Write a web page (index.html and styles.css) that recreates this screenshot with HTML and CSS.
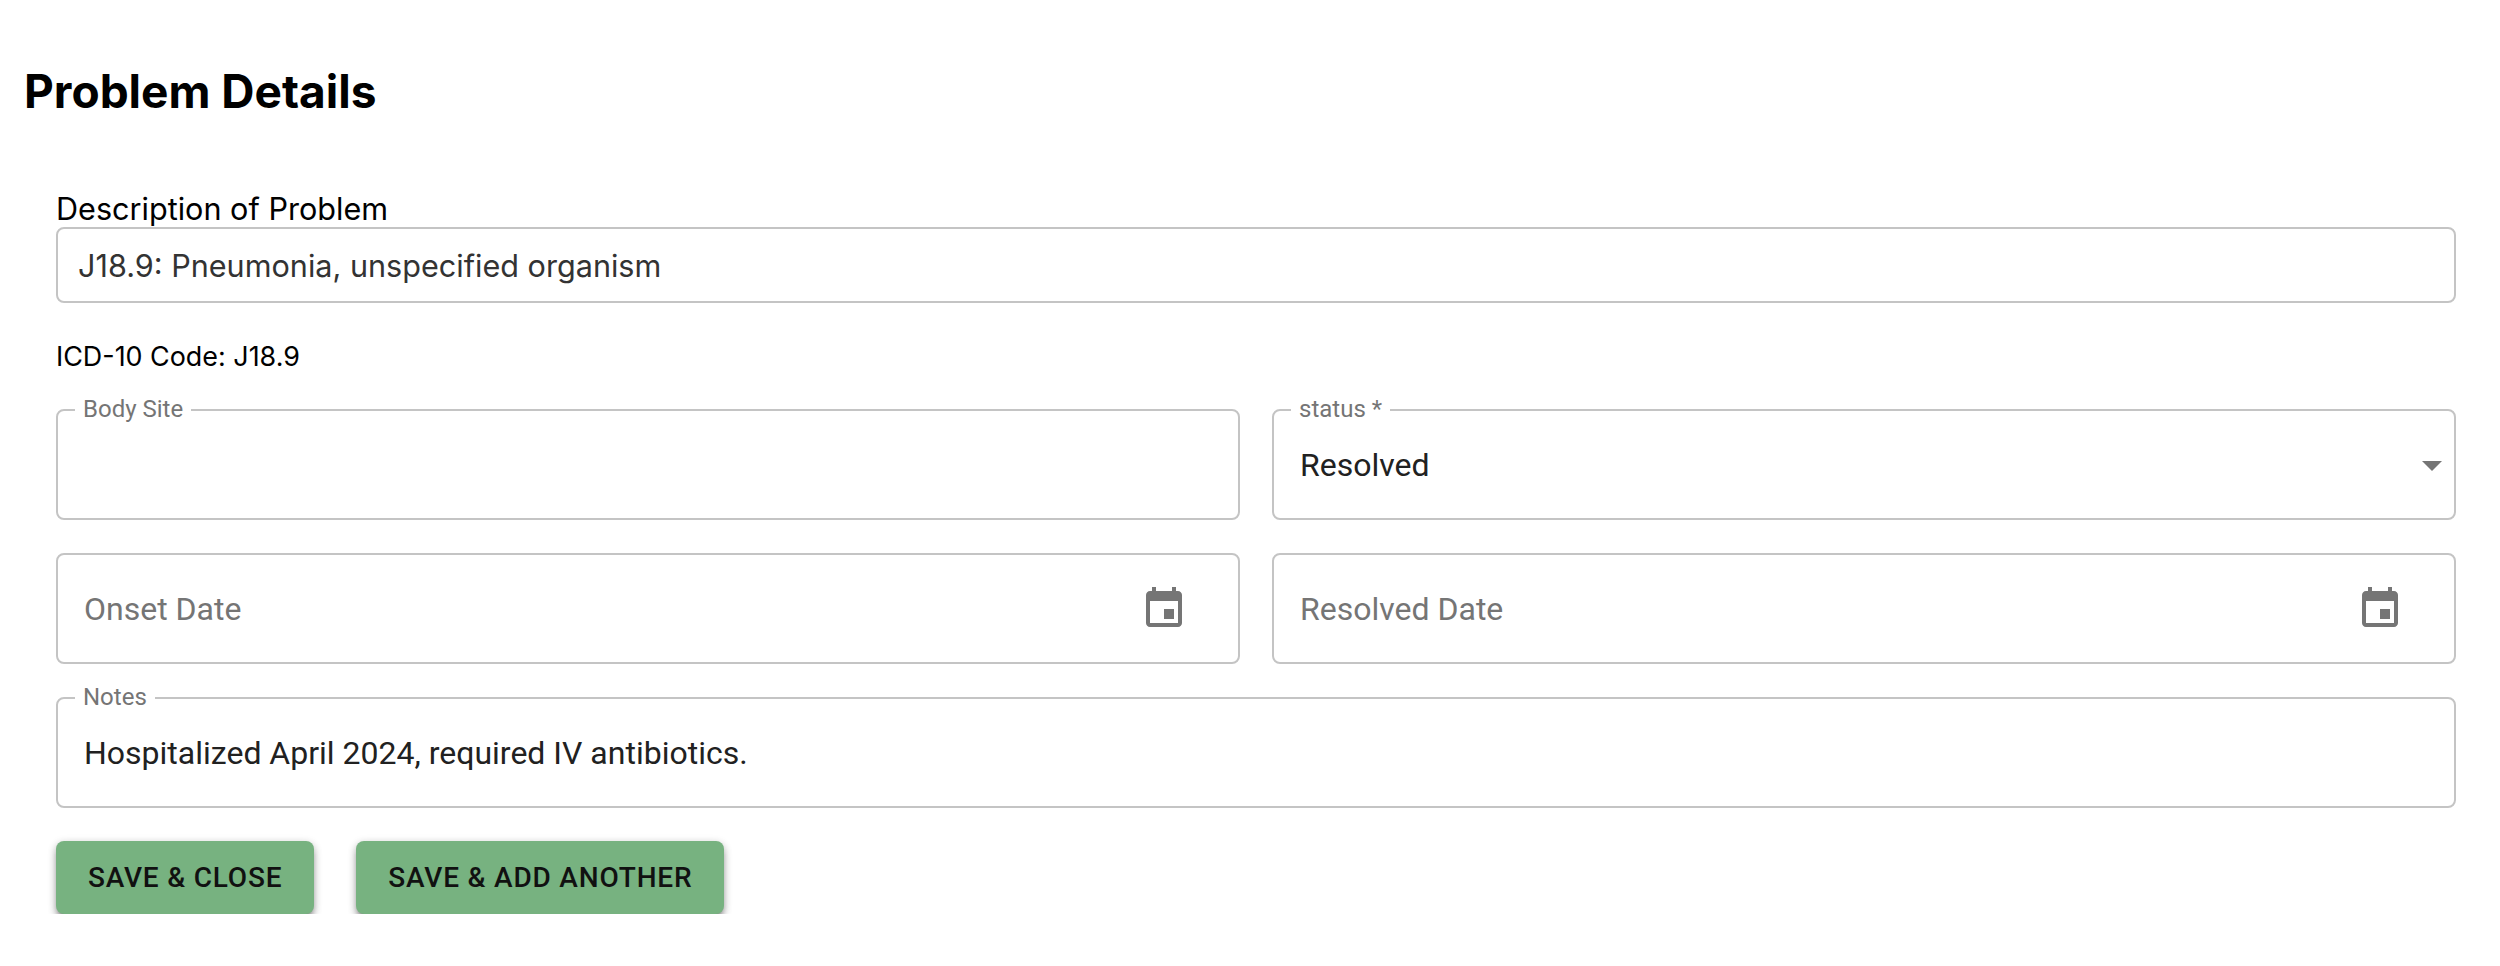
FILE: index.html
```html
<!DOCTYPE html>
<html lang="en">
<head>
    <meta charset="UTF-8">
    <title>Problem Details</title>
    <link rel="stylesheet" href="styles.css">
</head>
<body>

<div class="page">
    <h1>Problem Details</h1>

    <div class="form">
        <div class="description">
            <div class="description-label">Description of Problem</div>
            <div class="description-input">J18.9: Pneumonia, unspecified organism</div>
        </div>

        <div class="code">ICD-10 Code: J18.9</div>

        <div class="form-grid">
            <div class="field">
                <span class="field-label">Body Site</span>
            </div>
            <div class="field">
                <span class="field-label">status *</span>
                <span class="field-value">Resolved</span>
                <svg class="arrow" viewBox="0 0 24 24"><path d="M7 10l5 5 5-5z"/></svg>
            </div>
            <div class="field">
                <span class="field-placeholder">Onset Date</span>
                <svg class="calendar" viewBox="0 0 24 24"><path d="M17 12h-5v5h5v-5zM16 1v2H8V1H6v2H5c-1.11 0-1.99.9-1.99 2L3 19c0 1.1.89 2 2 2h14c1.1 0 2-.9 2-2V5c0-1.1-.9-2-2-2h-1V1h-2zm3 18H5V8h14v11z"/></svg>
            </div>
            <div class="field">
                <span class="field-placeholder">Resolved Date</span>
                <svg class="calendar" viewBox="0 0 24 24"><path d="M17 12h-5v5h5v-5zM16 1v2H8V1H6v2H5c-1.11 0-1.99.9-1.99 2L3 19c0 1.1.89 2 2 2h14c1.1 0 2-.9 2-2V5c0-1.1-.9-2-2-2h-1V1h-2zm3 18H5V8h14v11z"/></svg>
            </div>
            <div class="field field-wide">
                <span class="field-label">Notes</span>
                <span class="field-value">Hospitalized April 2024, required IV antibiotics.</span>
            </div>
        </div>

        <div class="buttons">
            <button class="btn" type="button">Save &amp; Close</button>
            <button class="btn" type="button">Save &amp; Add Another</button>
        </div>
    </div>
</div>

</body>
</html>
```

FILE: styles.css
```css
* {
    padding: 0;
    margin: 0;
    box-sizing: border-box;
}

body {
    font-family: Inter, sans-serif;
    background-color: #fff;
    color: #000;
}

.page {
    padding: 64px 44px 0 24px;
}

h1 {
    font-size: 46px;
    line-height: 54px;
    font-weight: 700;
    margin-bottom: 73px;
}

.form {
    padding-left: 32px;
}

.description-label {
    font-size: 30.6px;
    line-height: 36px;
}

.description-input {
    height: 76px;
    padding: 0 20px;
    display: flex;
    align-items: center;
    border: 2px solid #c4c4c4;
    border-radius: 8px;
    font-size: 30.6px;
    color: #333;
}

.code {
    margin-top: 36px;
    margin-bottom: 36px;
    font-size: 26.9px;
    line-height: 34px;
}

.form-grid {
    display: grid;
    grid-template-columns: 1fr 1fr;
    gap: 33px 32px;
}

.field {
    position: relative;
    height: 111px;
    padding: 0 50px 0 26px;
    display: flex;
    align-items: center;
    justify-content: space-between;
    border: 2px solid #c4c4c4;
    border-radius: 8px;
    font-family: Roboto, sans-serif;
    font-size: 32px;
}

.field-wide {
    grid-column: 1 / -1;
}

.field-label {
    position: absolute;
    top: -14px;
    left: 17px;
    padding: 0 8px;
    background-color: #fff;
    font-size: 24px;
    line-height: 24px;
    color: #757575;
}

.field-value {
    color: #212121;
}

.field-placeholder {
    color: #757575;
}

.calendar {
    width: 48px;
    height: 48px;
    fill: #757575;
}

.arrow {
    position: absolute;
    top: 30px;
    right: -2px;
    width: 48px;
    height: 48px;
    fill: #757575;
}

.buttons {
    margin-top: 33px;
    display: flex;
    gap: 42px;
}

.btn {
    height: 73px;
    padding: 0 32px;
    border: none;
    border-radius: 8px;
    background-color: #77b280;
    color: #111;
    font-family: Roboto, sans-serif;
    font-size: 28px;
    font-weight: 500;
    letter-spacing: 0.8px;
    text-transform: uppercase;
    box-shadow: 0 6px 6px -3px rgba(0, 0, 0, 0.4), 0 4px 8px 0 rgba(0, 0, 0, 0.2), 0 2px 10px 0 rgba(0, 0, 0, 0.14);
}
```
